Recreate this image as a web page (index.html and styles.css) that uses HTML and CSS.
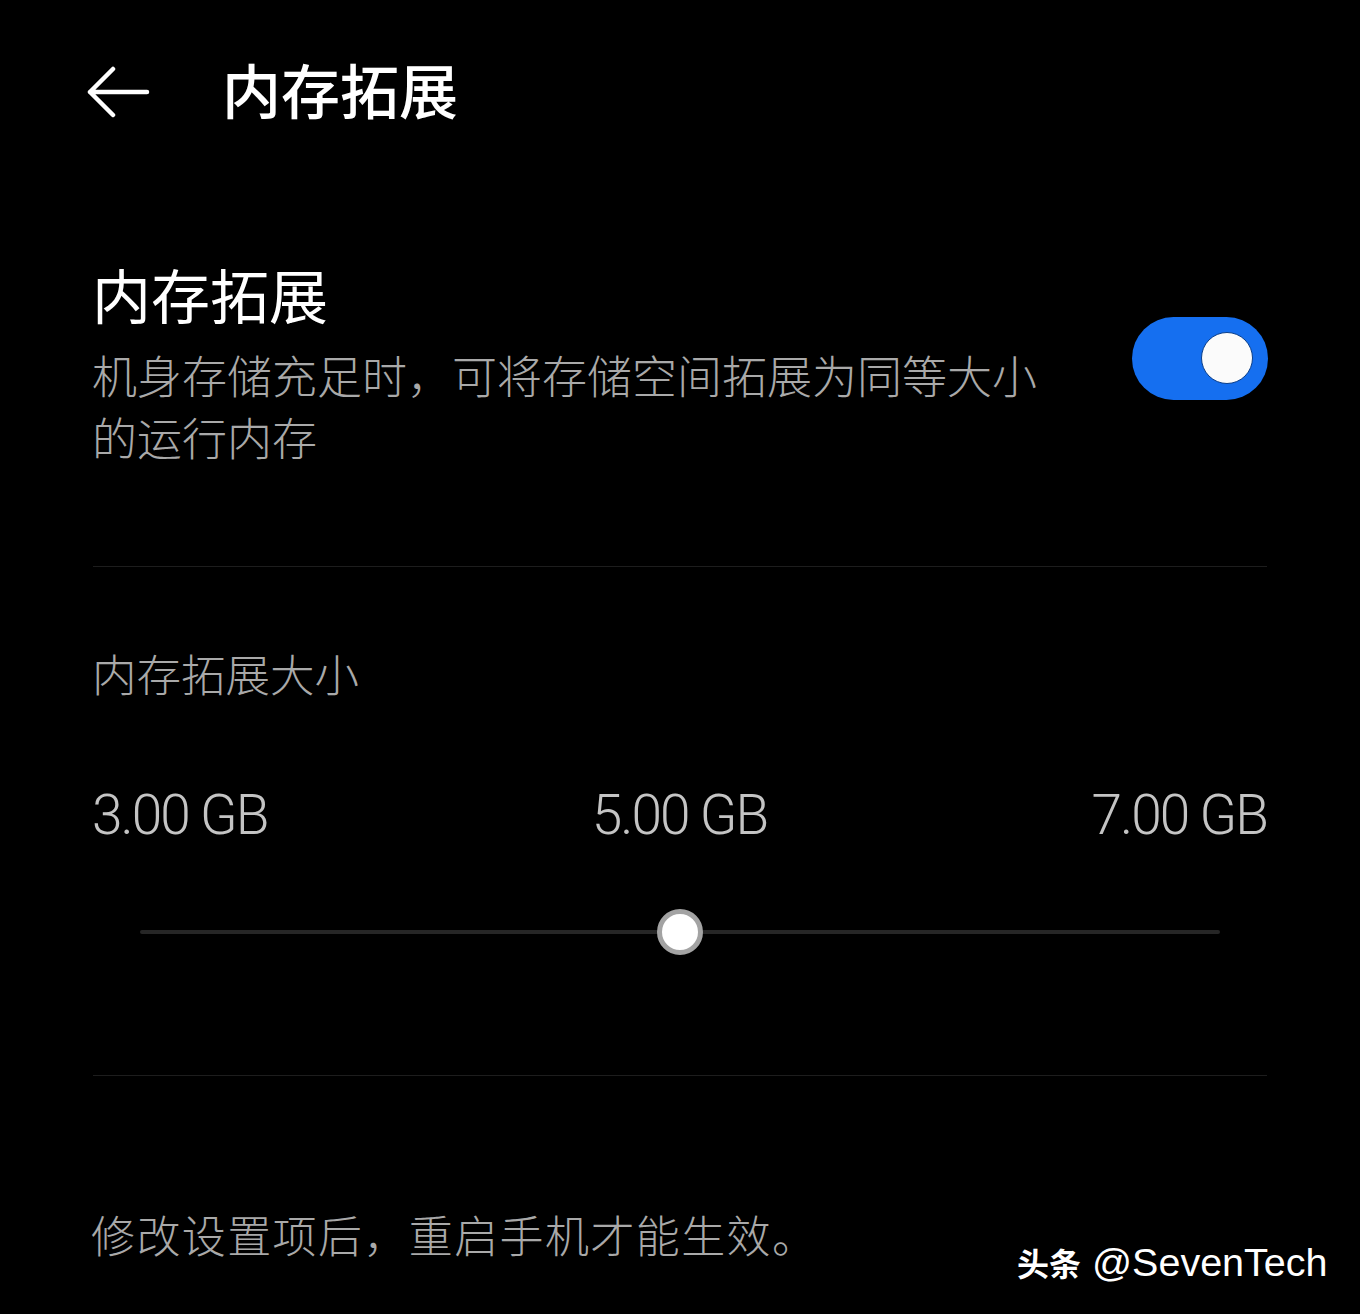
FILE: index.html
```html
<!DOCTYPE html>
<html lang="zh-CN">
<head>
    <meta charset="UTF-8">
    <title>内存拓展</title>
    <link rel="stylesheet" href="styles.css">
</head>
<body>
    <div class="header">
        <svg class="back" width="64" height="52" viewBox="0 0 64 52">
            <path d="M4 26 H61 M27 3 L4 26 L27 49" fill="none" stroke="#fff" stroke-width="4.5" stroke-linecap="round" stroke-linejoin="round"/>
        </svg>
        <h1 class="title">内存拓展</h1>
    </div>

    <div class="row-switch">
        <div class="row-text">
            <div class="row-title">内存拓展</div>
            <div class="row-desc">机身存储充足时，可将存储空间拓展为同等大小的运行内存</div>
        </div>
        <div class="toggle"><div class="knob"></div></div>
    </div>

    <div class="divider"></div>

    <div class="size-block">
        <div class="size-label">内存拓展大小</div>
        <div class="values">
            <span>3.00 GB</span>
            <span>5.00 GB</span>
            <span>7.00 GB</span>
        </div>
        <div class="slider">
            <div class="track"></div>
            <div class="thumb"></div>
        </div>
    </div>

    <div class="divider"></div>

    <p class="note">修改设置项后，重启手机才能生效。</p>

    <div class="watermark"><b>头条</b> @SevenTech</div>
</body>
</html>
```

FILE: styles.css
```css
html, body { margin: 0; padding: 0; background: #000; }
body {
    width: 1360px; height: 1314px; position: relative; overflow: hidden;
    font-family: "Noto Sans CJK SC", "Noto Sans", sans-serif; color: #fff;
}

.header { height: 178px; display: flex; align-items: center; padding-left: 86px; }
.back { display: block; margin-right: 72px; margin-top: 6px; }
.title { margin: 0; font-size: 59px; font-weight: 500; line-height: 80px; letter-spacing: 0; }

.row-switch { display: flex; align-items: center; justify-content: space-between; padding: 76px 92px 98px 92px; }
.row-text { width: 960px; }
.row-title { font-size: 59px; line-height: 80px; font-weight: 400; }
.row-desc { margin-top: 10px; font-size: 45px; line-height: 62px; color: #a9a9a9; font-weight: 300; }
.toggle {
    width: 136px; height: 83px; border-radius: 42px; background: #156ff0;
    display: flex; align-items: center; justify-content: flex-end; padding-right: 15px;
    box-sizing: border-box; margin-top: -6px;
}
.knob { width: 52px; height: 52px; border-radius: 50%; background: #fbfbfb; border: 1px solid #0b3f8a; box-sizing: border-box; }

.divider { height: 1px; background: #1d1d1d; margin: 0 93px; }

.size-block { padding: 76px 93px 120px 92px; }
.size-label { font-size: 44.5px; line-height: 60px; color: #a9a9a9; font-weight: 300; }
.values {
    display: flex; justify-content: space-between; margin-top: 82px;
    font-family: Roboto, "Noto Sans", sans-serif; font-weight: 300;
    font-size: 55px; line-height: 60px; color: #c4c4c4; letter-spacing: -2px;
}
.slider { position: relative; height: 46px; margin: 64px 47px 0 48px; display: flex; align-items: center; justify-content: center; }
.track { position: absolute; left: 0; right: 0; top: 21px; height: 4px; border-radius: 2px; background: #262626; }
.thumb { position: relative; width: 46px; height: 46px; border-radius: 50%; background: #fff; border: 5px solid #a3a3a3; box-sizing: border-box; }

.note { margin: 0; padding-top: 128px; padding-left: 91px; font-size: 44px; line-height: 60px; color: #a9a9a9; font-weight: 300; letter-spacing: 1.4px; }

.watermark {
    position: absolute; left: 1017px; top: 1237px;
    font-family: "Liberation Sans", "Noto Sans CJK SC", sans-serif; font-size: 39.5px; line-height: 50px; color: #fff;
}
.watermark b { font-family: "Noto Sans CJK SC", sans-serif; font-weight: 700; font-size: 32px; }
```
